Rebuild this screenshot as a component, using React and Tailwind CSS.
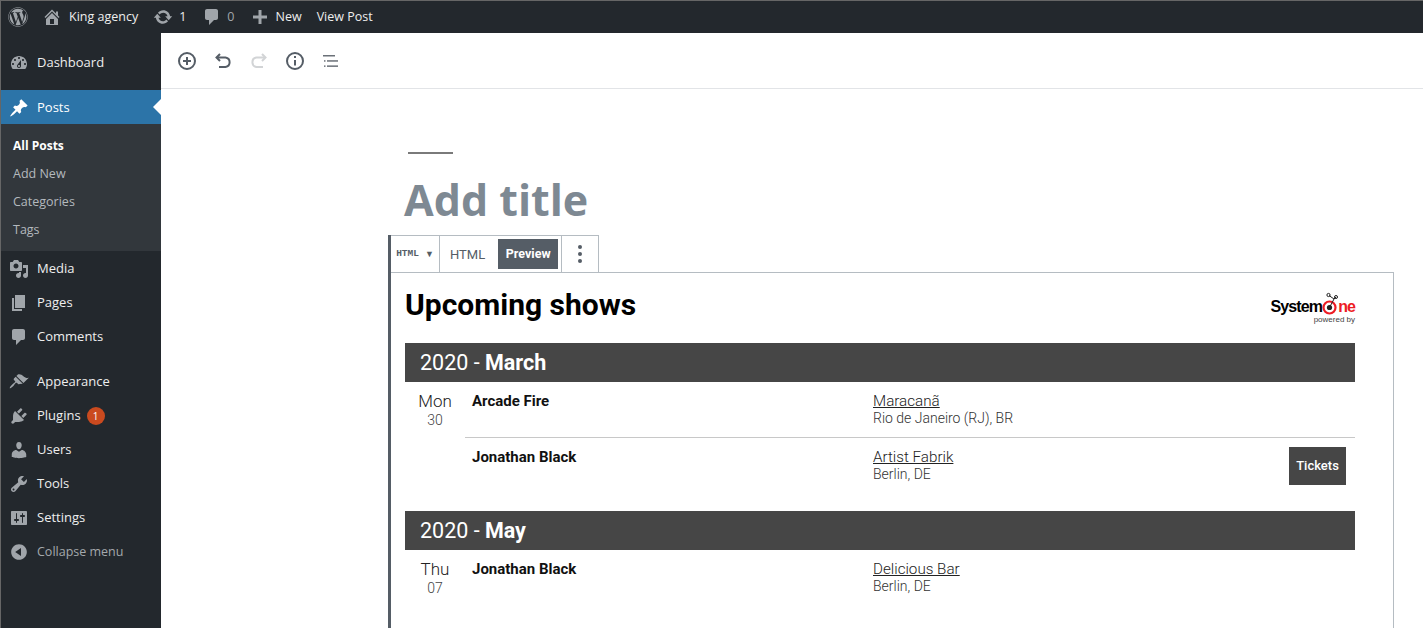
import { FaWordpress } from "react-icons/fa";

const dash = {
  home: "M16 8.5l1.53 1.53-1.06 1.06L10 4.62l-6.47 6.47-1.06-1.06L10 2.5l4 4v-2h2v4zm-6-2.46l6 5.99V18H4v-5.97zM12 17v-5H8v5h4z",
  update:
    "M10.2 3.28c3.53 0 6.43 2.61 6.92 6h2.08l-3.5 4-3.5-4h2.32c-.45-1.97-2.21-3.45-4.32-3.45-1.45 0-2.73.71-3.54 1.78L4.95 5.66C6.23 4.2 8.11 3.28 10.2 3.28zm-.4 13.44c-3.52 0-6.43-2.61-6.92-6H.8l3.5-4c1.17 1.33 2.33 2.67 3.5 4H5.48c.45 1.97 2.21 3.45 4.32 3.45 1.45 0 2.73-.71 3.54-1.78l1.71 1.95c-1.28 1.46-3.15 2.38-5.25 2.38z",
  comment: "M5 2h9c1.1 0 2 .9 2 2v7c0 1.1-.9 2-2 2h-2l-5 5v-5H5c-1.1 0-2-.9-2-2V4c0-1.1.9-2 2-2z",
  plus: "M17 8.5v3h-5.5V17h-3v-5.5H3v-3h5.5V3h3v5.5H17z",
  dashboard:
    "M3.76 16h12.48c1.1-1.37 1.76-3.11 1.76-5 0-4.42-3.58-8-8-8s-8 3.58-8 8c0 1.89.66 3.63 1.76 5zM10 4c.55 0 1 .45 1 1s-.45 1-1 1-1-.45-1-1 .45-1 1-1zM6 6c.55 0 1 .45 1 1s-.45 1-1 1-1-.45-1-1 .45-1 1-1zm8 0c.55 0 1 .45 1 1s-.45 1-1 1-1-.45-1-1 .45-1 1-1zm-5.37 5.55L12 7v6c0 1.1-.9 2-2 2s-2-.9-2-2c0-.57.24-1.08.63-1.45zM4 10c.55 0 1 .45 1 1s-.45 1-1 1-1-.45-1-1 .45-1 1-1zm12 0c.55 0 1 .45 1 1s-.45 1-1 1-1-.45-1-1 .45-1 1-1zm-5 3c0-.55-.45-1-1-1s-1 .45-1 1 .45 1 1 1 1-.45 1-1z",
  pin: "M10.44 3.02l1.82-1.82 6.36 6.35-1.83 1.82c-1.05-.68-2.48-.57-3.41.36l-.75.75c-.92.93-1.04 2.35-.35 3.41l-1.83 1.82-2.41-2.41-2.8 2.79c-.42.42-3.38 2.71-3.8 2.29s1.86-3.39 2.28-3.81l2.79-2.79L4.1 9.36l1.83-1.82c1.05.69 2.48.57 3.4-.36l.75-.75c.93-.92 1.05-2.35.36-3.41z",
  media:
    "M13 11V4c0-.55-.45-1-1-1h-1.67L9 1H5L3.67 3H2c-.55 0-1 .45-1 1v7c0 .55.45 1 1 1h10c.55 0 1-.45 1-1zM7 4.5c1.38 0 2.5 1.12 2.5 2.5S8.38 9.5 7 9.5 4.5 8.38 4.5 7 5.62 4.5 7 4.5zM14 6h5v10.5c0 1.38-1.12 2.5-2.5 2.5S14 17.88 14 16.5s1.12-2.5 2.5-2.5c.17 0 .34.02.5.05V9h-3V6zm-4 8.05V13h2v3.5c0 1.38-1.12 2.5-2.5 2.5S7 17.88 7 16.5 8.12 14 9.5 14c.17 0 .34.02.5.05z",
  page: "M6 15V2h10v13H6zm-1 1h8v2H3V5h2v11z",
  appearance:
    "M14.48 11.06L7.41 3.99l1.5-1.5c.5-.56 2.3-.47 3.51.32 1.21.8 1.43 1.28 2.91 2.1 1.18.64 2.45 1.26 4.45.85zm-.71.71L6.7 4.7 4.93 6.47c-.39.39-.39 1.02 0 1.41l1.06 1.06c.39.39.39 1.03 0 1.42-.6.6-1.43 1.11-2.21 1.69-.35.26-.7.53-1.01.84-1.43 1.43-2.35 3.1-2.06 3.39.29.29 1.96-.63 3.39-2.06.31-.31.58-.66.84-1.01.58-.78 1.09-1.61 1.69-2.21.39-.39 1.03-.39 1.42 0l1.06 1.06c.39.39 1.02.39 1.41 0z",
  plugins:
    "M13.11 4.36L9.87 7.6 8 5.73l3.24-3.24c.35-.34 1.05-.2 1.56.32.52.51.66 1.21.31 1.55zm-8 1.77l.91-1.12 9.01 9.01-1.19.84c-.71.71-2.63 1.16-3.82 1.16H6.14L4.9 17.26c-.59.59-1.54.59-2.12 0-.59-.58-.59-1.53 0-2.12l1.24-1.24v-3.88c0-1.13.4-3.19 1.09-3.89zm7.26 3.97l3.24-3.24c.34-.35 1.04-.21 1.55.31.52.51.66 1.21.31 1.55l-3.24 3.25z",
  users:
    "M10 9.25c-2.27 0-2.73-3.44-2.73-3.44C7 4.02 7.82 2 9.97 2c2.16 0 2.98 2.02 2.71 3.81 0 0-.41 3.44-2.68 3.44zm0 2.57L12.72 10c2.39 0 4.52 2.33 4.52 4.53v2.49s-3.65 1.13-7.24 1.13c-3.65 0-7.24-1.13-7.24-1.13v-2.49c0-2.25 1.94-4.48 4.47-4.48z",
  tools:
    "M16.68 9.77c-1.34 1.34-3.3 1.67-4.95.99l-5.41 6.52c-.99.99-2.59.99-3.58 0s-.99-2.59 0-3.57l6.52-5.42c-.68-1.65-.35-3.61.99-4.95 1.28-1.28 3.12-1.62 4.72-1.06l-2.89 2.89 2.82 2.82 2.86-2.87c.53 1.58.18 3.39-1.08 4.65zM3.81 16.21c.4.39 1.04.39 1.43 0 .4-.4.4-1.04 0-1.43-.39-.4-1.03-.4-1.43 0-.39.39-.39 1.03 0 1.43z",
  settings:
    "M18 16V4c0-.55-.45-1-1-1H3c-.55 0-1 .45-1 1v12c0 .55.45 1 1 1h14c.55 0 1-.45 1-1zM8 11h1c.55 0 1 .45 1 1s-.45 1-1 1H8v1.5c0 .28-.22.5-.5.5s-.5-.22-.5-.5V13H6c-.55 0-1-.45-1-1s.45-1 1-1h1V5.5c0-.28.22-.5.5-.5s.5.22.5.5V11zm5-2h-1c-.55 0-1-.45-1-1s.45-1 1-1h1V5.5c0-.28.22-.5.5-.5s.5.22.5.5V7h1c.55 0 1 .45 1 1s-.45 1-1 1h-1v5.5c0 .28-.22.5-.5.5s-.5-.22-.5-.5V9z",
  collapse: "M10 2.16c4.33 0 7.84 3.51 7.84 7.84s-3.51 7.84-7.84 7.84S2.16 14.33 2.16 10 5.71 2.16 10 2.16zm2 11.72V6.12L6.18 9.97z",
};

const Dash = ({ d, className }) => (
  <svg viewBox="0 0 20 20" fill="currentColor" fillRule="evenodd" className={className}>
    <path d={d} />
  </svg>
);

const MenuItem = ({ icon, label, children, dim }) => (
  <div className={`flex h-[34px] items-center pl-[8px] pt-[2px] ${dim ? "text-[#a4a8ac]" : "text-[#eeeeee]"}`}>
    <Dash d={icon} className="h-5 w-5 shrink-0 text-[#a0a5aa]" />
    <span className={`ml-[8px] ${dim ? "text-[12.5px]" : "text-[13px]"}`}>{label}</span>
    {children}
  </div>
);

const Sidebar = () => (
  <aside className="w-[160px] shrink-0 bg-[#23282d] pt-[12px]">
    <MenuItem icon={dash.dashboard} label="Dashboard" />
    <div className="relative mt-[11px] flex h-[34px] items-center bg-[#2c74a8] pl-[8px] pt-[2px] text-white">
      <Dash d={dash.pin} className="h-5 w-5 shrink-0" />
      <span className="ml-[8px] text-[13px]">Posts</span>
      <span className="absolute right-0 top-[9px] h-0 w-0 border-y-[8px] border-r-[8px] border-y-transparent border-r-white" />
    </div>
    <div className="bg-[#32373c] pb-[7px] pt-[8px] text-[12.5px] text-[#b4b9be]">
      <div className="flex h-[28px] items-center pl-[12px] text-[12px] font-bold text-white">All Posts</div>
      <div className="flex h-[28px] items-center pl-[12px]">Add New</div>
      <div className="flex h-[28px] items-center pl-[12px]">Categories</div>
      <div className="flex h-[28px] items-center pl-[12px]">Tags</div>
    </div>
    <MenuItem icon={dash.media} label="Media" />
    <MenuItem icon={dash.page} label="Pages" />
    <MenuItem icon={dash.comment} label="Comments" />
    <div className="h-[11px]" />
    <MenuItem icon={dash.appearance} label="Appearance" />
    <MenuItem icon={dash.plugins} label="Plugins">
      <span className="ml-[6px] flex h-[18px] w-[18px] items-center justify-center rounded-full bg-[#ca4a1f] text-[10px] text-white">
        1
      </span>
    </MenuItem>
    <MenuItem icon={dash.users} label="Users" />
    <MenuItem icon={dash.tools} label="Tools" />
    <MenuItem icon={dash.settings} label="Settings" />
    <MenuItem icon={dash.collapse} label="Collapse menu" dim />
  </aside>
);

const TopBar = () => (
  <header className="flex h-[32px] shrink-0 items-center bg-[#23282d] text-[12.5px] text-[#eeeeee]">
    <FaWordpress className="ml-[7px] h-5 w-5 text-[#a0a5aa]" />
    <Dash d={dash.home} className="ml-[14px] h-5 w-5 text-[#a0a5aa]" />
    <span className="ml-[7px]">King agency</span>
    <Dash d={dash.update} className="ml-[15px] h-5 w-5 text-[#a0a5aa]" />
    <span className="ml-[6px]">1</span>
    <Dash d={dash.comment} className="ml-[16px] h-5 w-5 text-[#a0a5aa]" />
    <span className="ml-[5px] text-[#a0a5aa]">0</span>
    <Dash d={dash.plus} className="ml-[15px] h-5 w-5 text-[#a0a5aa]" />
    <span className="ml-[6px]">New</span>
    <span className="ml-[15px]">View Post</span>
  </header>
);

const ToolButton = ({ children }) => (
  <button className="flex h-9 w-9 items-center justify-center">{children}</button>
);

const EditorToolbar = () => (
  <div className="flex h-[56px] shrink-0 items-center border-b border-[#e2e4e7] pl-[8px] pt-[1px]">
    <ToolButton>
      <svg viewBox="0 0 24 24" fill="none" stroke="#555d66" strokeWidth="2" className="h-6 w-6">
        <circle cx="12" cy="12" r="8" />
        <path d="M12 8v8M8 12h8" />
      </svg>
    </ToolButton>
    <ToolButton>
      <svg viewBox="0 0 24 24" fill="none" stroke="#555d66" strokeWidth="2" className="h-6 w-6">
        <path d="M9 5L5.5 8.5 9 12" />
        <path d="M6 8.5h8.5a4.8 4.8 0 0 1 0 9.5H8" />
      </svg>
    </ToolButton>
    <ToolButton>
      <svg viewBox="0 0 24 24" fill="none" stroke="#d2d4d6" strokeWidth="2" className="h-6 w-6">
        <path d="M15 5l3.5 3.5L15 12" />
        <path d="M18 8.5H9.5a4.8 4.8 0 0 0 0 9.5H16" />
      </svg>
    </ToolButton>
    <ToolButton>
      <svg viewBox="0 0 24 24" fill="none" stroke="#555d66" strokeWidth="2" className="h-6 w-6">
        <circle cx="12" cy="12" r="8" />
        <path d="M12 11v5.5" />
        <path d="M12 7v2" />
      </svg>
    </ToolButton>
    <ToolButton>
      <svg viewBox="0 0 24 24" fill="#6b7178" className="h-6 w-6">
        <rect x="4" y="6" width="12" height="1.5" />
        <rect x="8" y="11.2" width="11" height="1.5" />
        <rect x="8" y="16.4" width="11" height="1.5" />
        <rect x="5" y="11.2" width="1.5" height="1.5" />
        <rect x="5" y="16.4" width="1.5" height="1.5" />
      </svg>
    </ToolButton>
  </div>
);

const SystemOneLogo = () => (
  <div className="flex flex-col items-end font-['Liberation_Sans',sans-serif]">
    <div className="flex items-center text-[16px] font-bold leading-[18px] tracking-[-0.9px] text-black">
      System
      <svg viewBox="0 0 16 24" className="-mt-[6px] h-[24px] w-[16px]">
        <circle cx="7.5" cy="15.5" r="6" fill="none" stroke="#ed1c24" strokeWidth="2.2" />
        <circle cx="7.5" cy="15.5" r="2.6" fill="#222" />
        <path d="M7.5 15.5L12 7M12 7L7 3.5M12 7l2-2" stroke="#222" strokeWidth="1" fill="none" />
        <circle cx="6.5" cy="3" r="1.6" fill="none" stroke="#222" />
        <circle cx="14" cy="5" r="1.5" fill="none" stroke="#222" />
      </svg>
      <span className="text-[#ed1c24]">ne</span>
    </div>
    <div className="mt-[-1px] text-[8px] leading-[10px] text-[#444444]">powered by</div>
  </div>
);

const MonthBar = ({ year, month }) => (
  <div className="flex h-[39px] items-center bg-[#464646] pl-[15px] pt-[2px] text-[21.5px] text-white">
    {year} -&nbsp;<strong className="font-bold">{month}</strong>
  </div>
);

const DayCell = ({ day, num }) => (
  <div className="w-[60px] shrink-0 pt-[9px] text-center font-light">
    <div className="text-[17px] leading-[20px] text-[#222222]">{day}</div>
    <div className="text-[14px] leading-[18px] text-[#444444]">{num}</div>
  </div>
);

const EventRow = ({ name, venue, city, tickets, last }) => (
  <div className={`flex pl-[7px] pt-[9px] ${last ? "h-[73px]" : "h-[56px] border-b border-[#c8c8c8]"}`}>
    <div className="w-[401px] shrink-0 text-[15px] font-bold leading-[20px] text-[#111111]">{name}</div>
    <div className="flex-1 font-light">
      <a className="block text-[15.2px] leading-[20px] text-[#222222] underline">{venue}</a>
      <div className="text-[14px] leading-[14px] text-[#333333]">{city}</div>
    </div>
    {tickets && (
      <button className="mr-[9px] h-[38px] w-[57px] bg-[#464646] text-[13px] font-medium text-white">Tickets</button>
    )}
  </div>
);

const ShowsBlock = () => (
  <div className="ml-[227px] w-[1006px] flex-1 border-l-[3px] border-[#555d66] font-['Roboto',sans-serif]">
    <div className="flex h-[38px] w-[208px] border-y border-r border-[#b5bcc2] bg-white">
      <div className="flex w-[49px] items-center justify-center gap-[6px] border-r border-[#b5bcc2] pt-[1px] text-[#555d66]">
        <span className="font-['Liberation_Mono',monospace] text-[9.5px] font-bold">HTML</span>
        <span className="text-[9px]">▼</span>
      </div>
      <div className="flex w-[122px] items-center border-r border-[#b5bcc2] pl-[10px]">
        <span className="pt-[1px] text-[13px] text-[#555d66]">HTML</span>
        <span className="ml-[13px] flex h-[30px] w-[60px] items-center justify-center bg-[#555d66] pt-[1px] text-[12.5px] font-bold text-white">
          Preview
        </span>
      </div>
      <div className="flex flex-1 flex-col items-center justify-center gap-[3px]">
        <span className="h-[4px] w-[4px] rounded-full bg-[#555d66]" />
        <span className="h-[4px] w-[4px] rounded-full bg-[#555d66]" />
        <span className="h-[4px] w-[4px] rounded-full bg-[#555d66]" />
      </div>
    </div>
    <div className="-mt-px h-[400px] border-r border-t border-[#b5bcc2] pl-[14px] pr-[38px]">
      <div className="flex h-[70px] items-start justify-between">
        <h2 className="pt-[14px] text-[30px] font-bold leading-[36px] text-black">Upcoming shows</h2>
        <div className="pt-[25px]">
          <SystemOneLogo />
        </div>
      </div>
      <MonthBar year="2020" month="March" />
      <div className="flex">
        <DayCell day="Mon" num="30" />
        <div className="flex-1">
          <EventRow name="Arcade Fire" venue="Maracanã" city="Rio de Janeiro (RJ), BR" />
          <EventRow name="Jonathan Black" venue="Artist Fabrik" city="Berlin, DE" tickets last />
        </div>
      </div>
      <MonthBar year="2020" month="May" />
      <div className="flex">
        <DayCell day="Thu" num="07" />
        <div className="flex-1">
          <EventRow name="Jonathan Black" venue="Delicious Bar" city="Berlin, DE" last />
        </div>
      </div>
    </div>
  </div>
);

export default function App() {
  return (
    <div className="flex h-[628px] flex-col overflow-hidden border-l border-t border-[#666666] bg-white font-['Open_Sans',sans-serif]">
      <TopBar />
      <div className="flex min-h-0 flex-1">
        <Sidebar />
        <main className="flex min-w-0 flex-1 flex-col">
          <EditorToolbar />
          <div className="h-[146px] shrink-0 pl-[243px] pt-[63px]">
            <div className="ml-[4px] h-[2px] w-[45px] bg-[#7a7a7a]" />
            <h1 className="mt-[19px] text-[43px] font-bold leading-[54px] text-[#7e8993]">Add title</h1>
          </div>
          <ShowsBlock />
        </main>
      </div>
    </div>
  );
}
